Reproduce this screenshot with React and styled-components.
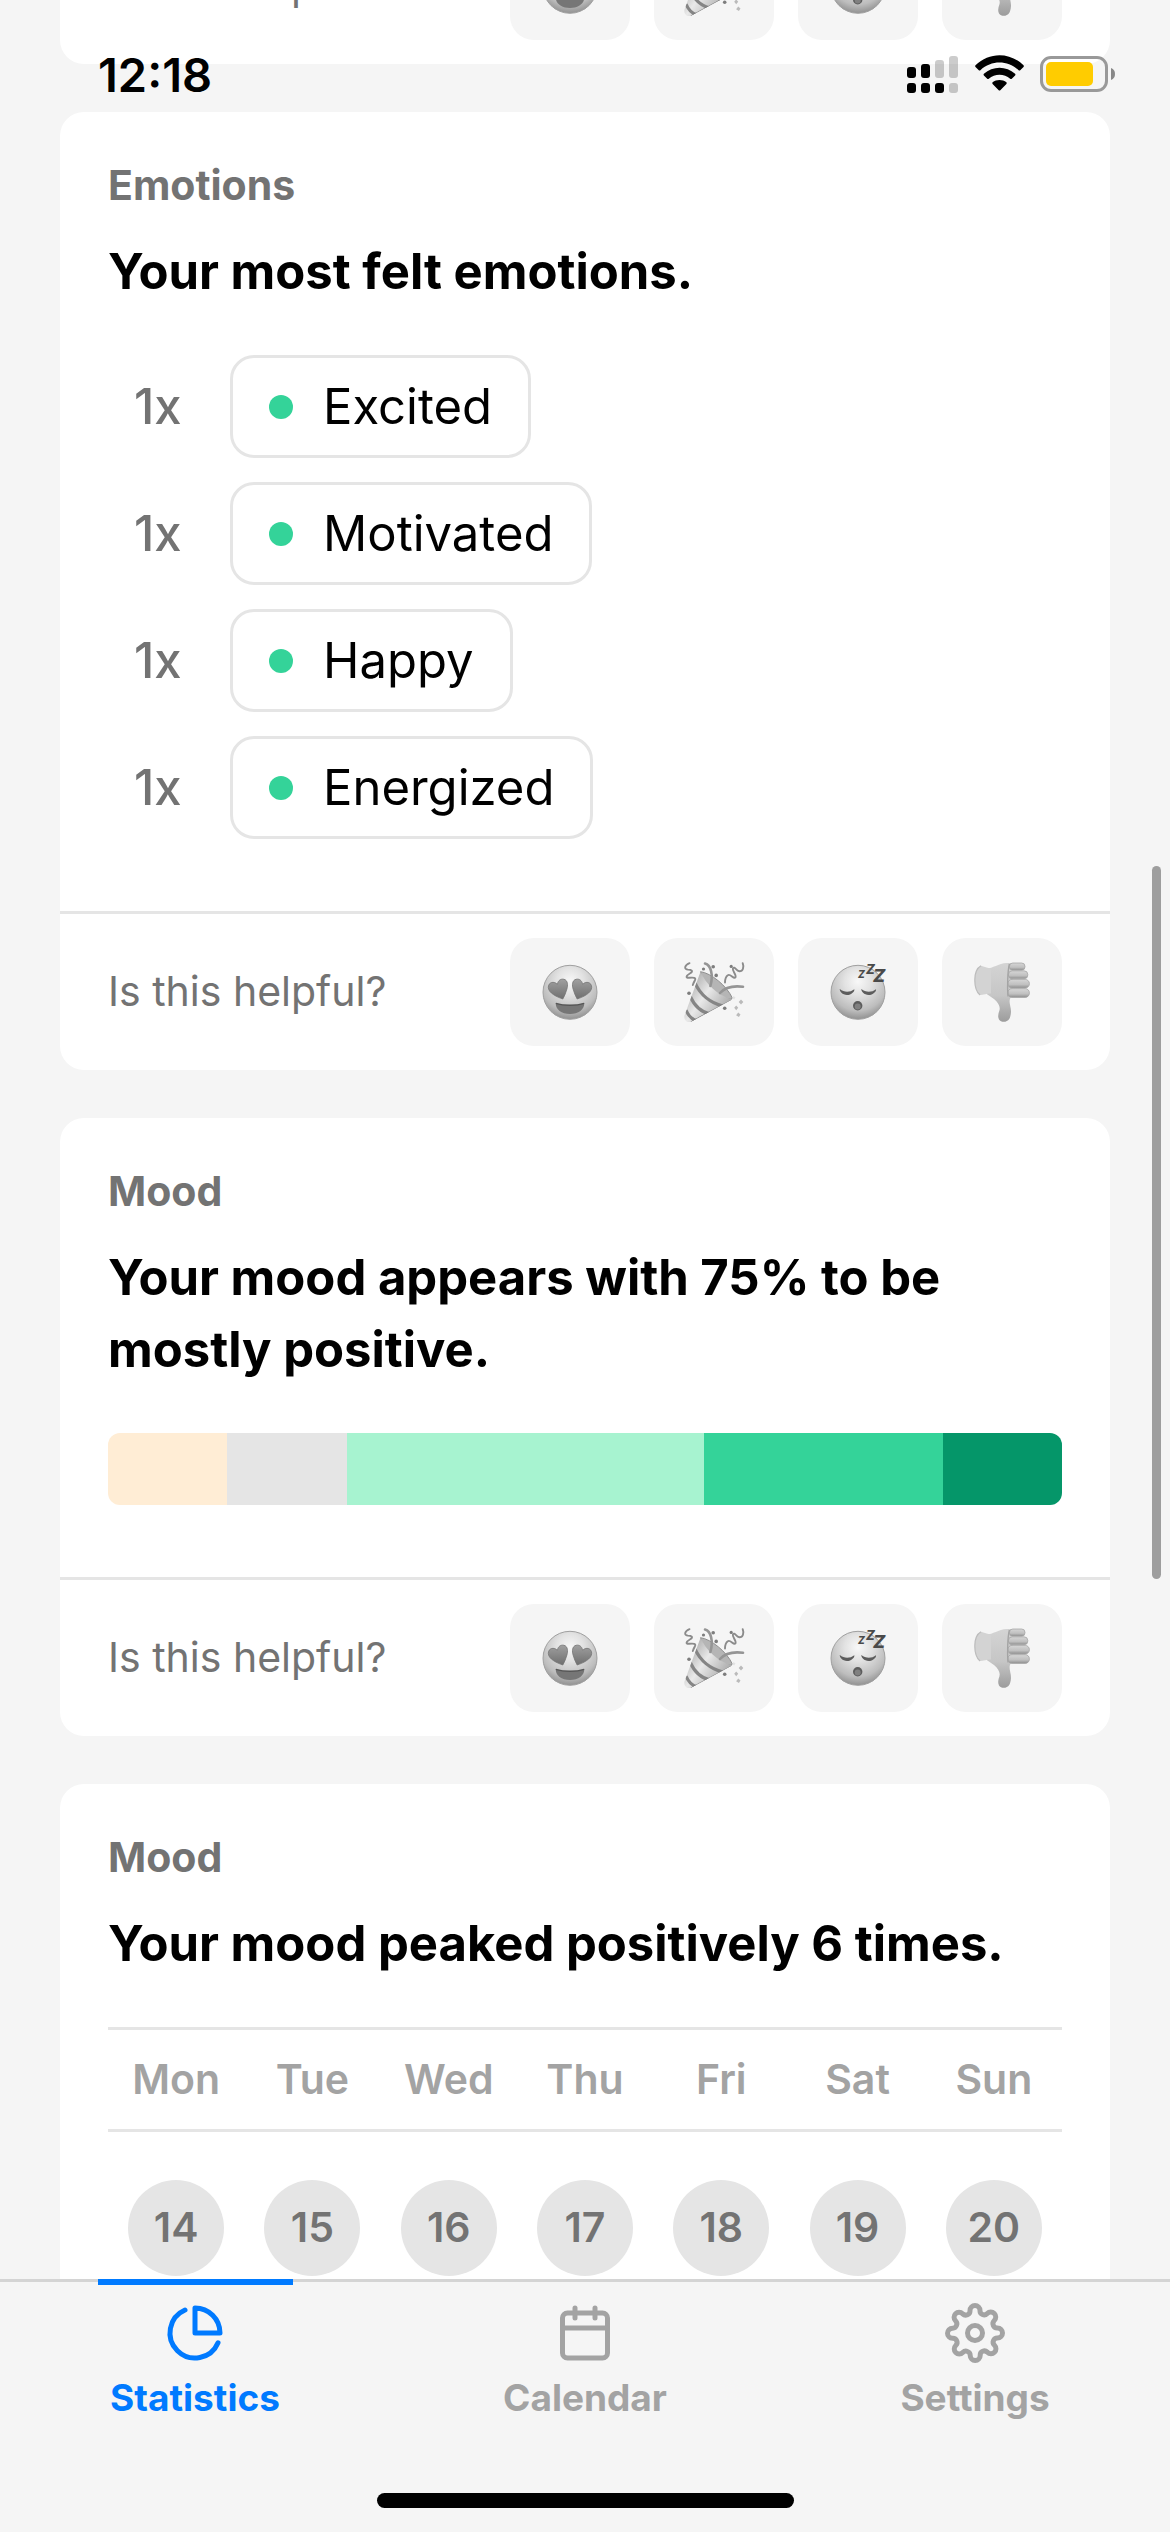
import React, { useId } from 'react';
import styled, { createGlobalStyle } from 'styled-components';
import { FiPieChart, FiCalendar, FiSettings } from 'react-icons/fi';

const emotions = [
  { count: 1, name: 'Excited' },
  { count: 1, name: 'Motivated' },
  { count: 1, name: 'Happy' },
  { count: 1, name: 'Energized' },
];

const moodScale = [
  { label: 'bad', share: 1, color: '#ffedd5' },
  { label: 'neutral', share: 1, color: '#e5e5e5' },
  { label: 'good', share: 3, color: '#a7f3d0' },
  { label: 'very good', share: 2, color: '#34d399' },
  { label: 'extremely good', share: 1, color: '#059669' },
];

const weekdays = ['Mon', 'Tue', 'Wed', 'Thu', 'Fri', 'Sat', 'Sun'];
const days = [14, 15, 16, 17, 18, 19, 20];

const tabs = [
  { name: 'Statistics', Icon: FiPieChart, active: true },
  { name: 'Calendar', Icon: FiCalendar },
  { name: 'Settings', Icon: FiSettings },
];

/* ---------- reaction drawings ---------- */

const FaceGradient = ({ id }) => (
  <radialGradient id={id} cx='0.5' cy='0.3' r='0.72'>
    <stop offset='0' stopColor='#f8f8f8' />
    <stop offset='0.35' stopColor='#e2e2e2' />
    <stop offset='0.75' stopColor='#bdbdbd' />
    <stop offset='1' stopColor='#8c8c8c' />
  </radialGradient>
);

const HEART =
  'M22.8 37C17 35 8.3 31 8.3 25.3C8.3 20.3 14 18.6 17.4 22.4C18 18 21.2 16.6 24 17.3C28 18.3 28 23.5 26.9 27C25.9 30.5 24.6 34 22.8 37Z';

const HeartEyes = () => {
  const id = useId();
  return (
    <Drawing viewBox='0 0 60 60' aria-hidden='true'>
      <defs>
        <FaceGradient id={id} />
        <linearGradient id={`${id}h`} x1='0' y1='0' x2='0' y2='1'>
          <stop offset='0' stopColor='#a0a0a0' />
          <stop offset='1' stopColor='#6f6f6f' />
        </linearGradient>
      </defs>
      <circle cx='30' cy='30.3' r='27' fill={`url(#${id})`} stroke='#a0a0a0' />
      <g fill={`url(#${id}h)`} stroke='#757575' strokeWidth='0.8'>
        <path d={HEART} />
        <path d={HEART} transform='translate(60 0) scale(-1 1)' />
      </g>
      <path
        d='M15.8 41.3C24 43.8 36 43.8 44.2 41.3C44.6 47.4 38.4 52 30 52S15.4 47.4 15.8 41.3Z'
        fill='#767676'
      />
      <path
        d='M15.8 41.3C24 43.8 36 43.8 44.2 41.3'
        fill='none'
        stroke='#555'
        strokeWidth='1.4'
      />
    </Drawing>
  );
};

const PartyPopper = () => {
  const id = useId();
  return (
    <Drawing viewBox='0 0 60 60' aria-hidden='true'>
      <defs>
        <linearGradient id={id} x1='0' y1='0.3' x2='0.7' y2='0.8'>
          <stop offset='0' stopColor='#9c9c9c' />
          <stop offset='0.5' stopColor='#e9e9e9' />
          <stop offset='1' stopColor='#a8a8a8' />
        </linearGradient>
        <clipPath id={`${id}c`}>
          <path d='M16.5 9.7C22 22 33 33 48 37.5L7.5 59.5C3 61.5 -0.5 58 0.5 53.5Z' />
        </clipPath>
      </defs>
      <path
        d='M16.5 9.7C27 11 43 24 48.3 36C46 42 18 24 16.5 9.7Z'
        fill='#b5b5b5'
        stroke='#8f8f8f'
      />
      <g clipPath={`url(#${id}c)`}>
        <rect width='60' height='60' fill={`url(#${id})`} />
        <g fill='none' stroke='#858585' strokeWidth='3.2'>
          <path d='M11 21C16 32 26 41 39 44' />
          <path d='M6 34C10 43 17 50 26 52' />
          <path d='M2 48C4 53 7 57 13 59' />
        </g>
        <path d='M7 60L48 38' stroke='#6c6c6c' strokeWidth='1.4' />
      </g>
      <g fill='none' stroke='#959595' strokeWidth='2.6' strokeLinecap='round'>
        <path d='M21 1.5C27 3 29.5 13 26.4 24' />
        <path d='M36 31C41 25.5 49 23.5 59 24.8' />
      </g>
      <g fill='none' stroke='#8b8b8b' strokeWidth='1.9' strokeLinecap='round'>
        <path d='M5.5 1.2C0 3.5 0 7.5 4 7.6C7.5 7.6 9.8 9 6.2 11.2C1.6 14 1.6 16 5 15.8C9.5 15.4 12.5 15.4 10.8 18.6C9.6 20.4 9.3 21.3 8.8 23' />
        <path d='M58.7 1.2C60.2 5 59 9.4 55.4 9.3C52 9 50.6 3.6 48.9 6.4C48 9 53 13 51.4 15.4C49.6 17.6 46.4 11.2 43.8 13.2C41.2 15 41 18 41 20.5' />
      </g>
      <g fill='#7d7d7d'>
        <circle cx='19.5' cy='7' r='1.6' />
        <circle cx='29.2' cy='4.7' r='1.8' />
        <circle cx='32.2' cy='13.4' r='1.8' />
        <circle cx='47.2' cy='4.4' r='1.6' />
        <circle cx='5' cy='31.2' r='1.8' />
        <circle cx='40.7' cy='46.2' r='1.8' />
      </g>
      <g fill='#bababa'>
        <path d='M57 37.6l2.3 2.4-2.3 2.4-2.3-2.4zM52.2 43.4l2 2.4-2 2.4-2-2.4zM54.2 50.4l2.3 2-1.6 2.6-2.8-1.8z' />
        <path d='M49.5 34l2 1.6-1.4 1.8-1.8-1.4z' fill='#e2e2e2' />
      </g>
    </Drawing>
  );
};

const Sleeping = () => {
  const id = useId();
  return (
    <Drawing viewBox='0 0 60 60' aria-hidden='true'>
      <defs>
        <FaceGradient id={id} />
      </defs>
      <circle cx='30' cy='30.3' r='27' fill={`url(#${id})`} stroke='#a0a0a0' />
      <g fill='#5c5c5c'>
        <path d='M11.8 27C16 30.6 22 30.6 26.3 27.2C27 29 23.5 33 19 33S11.2 29 11.8 27Z' />
        <path d='M33.4 27C37.6 30.6 43.8 30.6 48 27.2C48.7 29 45 33 40.6 33S32.8 29 33.4 27Z' />
        <circle cx='29.7' cy='43.7' r='4.7' />
      </g>
      <circle cx='29.7' cy='44.6' r='3' fill='#808080' />
      <g
        fill='#4a4a4a'
        fontFamily='Inter, sans-serif'
        fontWeight='800'
        fontStyle='italic'
      >
        <text x='30' y='16' fontSize='10'>Z</text>
        <text x='38' y='12' fontSize='13'>Z</text>
        <text x='45' y='20' fontSize='18'>Z</text>
      </g>
    </Drawing>
  );
};

const ThumbDown = () => {
  const id = useId();
  return (
    <Drawing viewBox='0 0 60 60' aria-hidden='true'>
      <defs>
        <linearGradient id={id} x1='0' y1='0' x2='0' y2='1'>
          <stop offset='0' stopColor='#d4d4d4' />
          <stop offset='0.55' stopColor='#c6c6c6' />
          <stop offset='1' stopColor='#9c9c9c' />
        </linearGradient>
        <linearGradient id={`${id}f`} x1='0' y1='0' x2='0' y2='1'>
          <stop offset='0' stopColor='#d6d6d6' />
          <stop offset='0.6' stopColor='#c0c0c0' />
          <stop offset='1' stopColor='#8e8e8e' />
        </linearGradient>
      </defs>
      <path
        d='M14.5 6.5C21 6.5 26 1.4 35 1H41L40 34.6C38.4 35.4 37.8 37 37.6 39C37.4 42 39.2 46 39 50C38.8 53 38.2 55.4 37.2 57C35 60.6 29 60.8 27 57.4C25.6 55 26.2 51.6 27.4 48.6C28.4 45.6 27 42.6 24.6 39.6C21.8 36.2 17.8 34.4 15 32.2Z'
        fill={`url(#${id})`}
      />
      <path
        d='M9 3.8C12 4.6 15.6 6 19 6.6V31.6C15.4 31.4 11.4 33 8 33C4.4 30 2.8 24 2.8 18S5 6 9 3.8Z'
        fill='#d3d3d3'
      />
      <path
        d='M9 3.8C5 6 2.8 12 2.8 18S4.4 30 8 33'
        fill='none'
        stroke='#bcbcbc'
        strokeWidth='1.2'
      />
      <g fill={`url(#${id}f)`} stroke='#a6a6a6' strokeWidth='0.8'>
        <rect x='37.4' y='1' width='15.6' height='7.2' rx='3.4' />
        <rect x='36.4' y='8.8' width='19.4' height='8' rx='3.8' />
        <rect x='35.8' y='17.4' width='21.6' height='8.6' rx='4.2' />
        <rect x='35.8' y='26.6' width='21.6' height='8.8' rx='4.2' />
      </g>
      <path
        d='M37.4 2C35.6 9 35.2 26 36 34.5'
        fill='none'
        stroke='#a4a4a4'
        strokeWidth='1.4'
      />
    </Drawing>
  );
};

const reactions = [
  { name: 'Love it', Picture: HeartEyes },
  { name: 'Celebrate', Picture: PartyPopper },
  { name: 'Boring', Picture: Sleeping },
  { name: 'Not helpful', Picture: ThumbDown },
];

/* ---------- components ---------- */

const Feedback = () => (
  <FeedbackRow>
    <Question>Is this helpful?</Question>
    <Reactions>
      {reactions.map(({ name, Picture }) => (
        <ReactionButton key={name} type='button' aria-label={name}>
          <Picture />
        </ReactionButton>
      ))}
    </Reactions>
  </FeedbackRow>
);

const StatCard = ({ category, title, children, feedback }) => (
  <Card>
    <CardBody>
      <Category>{category}</Category>
      <Title>{title}</Title>
      {children}
    </CardBody>
    {feedback && <Feedback />}
  </Card>
);

const StatusBar = () => (
  <StatusRow>
    <Clock>12:18</Clock>
    <StatusIcons viewBox='0 0 210 40' aria-hidden='true'>
      <g>
        <rect x='0' y='12' width='9' height='11' rx='3' />
        <rect x='14' y='9' width='9' height='14' rx='3' />
        <rect x='28' y='5' width='9' height='18' rx='3' opacity='0.2' />
        <rect x='42' y='1' width='9' height='22' rx='3' opacity='0.2' />
        <rect x='0' y='28' width='9' height='10' rx='3' />
        <rect x='14' y='28' width='9' height='10' rx='3' />
        <rect x='28' y='28' width='9' height='10' rx='3' />
        <rect x='42' y='28' width='9' height='10' rx='3' opacity='0.2' />
      </g>
      <g transform='translate(68 0)'>
        <path d='M0.5 10.2C14 -3.2 35 -3.2 48.5 10.2C49 10.8 49 11.4 48.5 12L45.2 15.2C44.8 15.6 44.2 15.6 43.6 15.2C32.6 5 16.4 5 5.4 15.2C4.8 15.6 4.2 15.6 3.8 15.2L0.5 12C0 11.4 0 10.8 0.5 10.2Z' />
        <path d='M8.9 18.7C17.6 10.6 31.4 10.6 40.1 18.7C40.6 19.2 40.6 19.9 40.1 20.4L36.8 23.7C36.3 24.1 35.7 24.1 35.2 23.7C29.2 18.5 19.8 18.5 13.8 23.7C13.3 24.1 12.7 24.1 12.2 23.7L8.9 20.4C8.4 19.9 8.4 19.2 8.9 18.7Z' />
        <path d='M17.6 27.3C21.4 24.2 27.6 24.2 31.4 27.3C31.9 27.8 31.9 28.4 31.4 28.9L25.3 35.2C24.8 35.7 24.2 35.7 23.7 35.2L17.6 28.9C17.1 28.4 17.1 27.8 17.6 27.3Z' />
      </g>
      <g transform='translate(133 1)'>
        <rect x='1.5' y='1.5' width='65' height='33' rx='9.5' fill='none' stroke='#999' strokeWidth='3' />
        <rect x='6' y='6' width='47' height='24' rx='5' fill='#fc0' />
        <path d='M71 12C74 13 75 15.4 75 18S74 23 71 24Z' fill='#888' />
      </g>
    </StatusIcons>
  </StatusRow>
);

const App = () => {
  return (
    <Screen>
      <GlobalStyle />
      <StatusBar />
      <Feed>
        <Card>
          <Feedback />
        </Card>

        <StatCard category='Emotions' title='Your most felt emotions.' feedback>
          <EmotionList>
            {emotions.map(({ count, name }) => (
              <li key={name}>
                <Count>{count}x</Count>
                <Pill>
                  <Dot />
                  {name}
                </Pill>
              </li>
            ))}
          </EmotionList>
        </StatCard>

        <StatCard
          category='Mood'
          title='Your mood appears with 75% to be mostly positive.'
          feedback
        >
          <MoodBar>
            {moodScale.map(({ label, share, color }) => (
              <Segment key={label} $share={share} $color={color} />
            ))}
          </MoodBar>
        </StatCard>

        <StatCard category='Mood' title='Your mood peaked positively 6 times.'>
          <Week>
            <thead>
              <tr>
                {weekdays.map((day) => (
                  <th key={day} scope='col'>
                    {day}
                  </th>
                ))}
              </tr>
            </thead>
            <tbody>
              <tr>
                {days.map((day) => (
                  <td key={day}>
                    <Day>{day}</Day>
                  </td>
                ))}
              </tr>
            </tbody>
          </Week>
        </StatCard>
      </Feed>
      <ScrollThumb />
      <BottomArea>
        <TabBar>
          {tabs.map(({ name, Icon, active }) => (
            <Tab key={name} href={`#${name.toLowerCase()}`} $active={active}>
              <Icon size={60} />
              {name}
            </Tab>
          ))}
        </TabBar>
        <HomeIndicator />
      </BottomArea>
    </Screen>
  );
};

/* ---------- styles ---------- */

const GlobalStyle = createGlobalStyle`
  * {
    box-sizing: border-box;
  }
  body {
    margin: 0;
    background: #f5f5f5;
    color: #000;
    font-family: Inter, 'Liberation Sans', sans-serif;
  }
`;

const Screen = styled.div`
  position: relative;
  display: flex;
  flex-direction: column;
  height: 100vh;
  overflow: hidden;
`;

const StatusRow = styled.header`
  position: absolute;
  top: 0;
  left: 0;
  right: 0;
  z-index: 1;
  display: flex;
  justify-content: space-between;
  align-items: center;
  padding: 47px 53px 0 98px;
`;

const Clock = styled.time`
  font-size: 47px;
  line-height: 56px;
  font-weight: 600;
`;

const StatusIcons = styled.svg`
  width: 210px;
  height: 40px;
`;

const Feed = styled.main`
  flex: 1;
  min-height: 0;
  display: flex;
  flex-direction: column;
  gap: 48px;
  padding: 0 60px;
  overflow-y: auto;
  scrollbar-width: none;

  /* the list is scrolled part of the way down */
  > :first-child {
    margin-top: -95px;
  }
`;

const Card = styled.section`
  flex-shrink: 0;
  background: #fff;
  border-radius: 24px;
`;

const CardBody = styled.div`
  padding: 48px 48px 72px;
`;

const Category = styled.h2`
  margin: 0 0 25px;
  font-size: 41px;
  line-height: 51px;
  font-weight: 700;
  color: #737373;
`;

const Title = styled.h3`
  margin: 0 0 47px;
  font-size: 49px;
  line-height: 72px;
  font-weight: 700;
`;

const EmotionList = styled.ul`
  display: flex;
  flex-direction: column;
  gap: 24px;
  margin: 0;
  padding: 0 0 0 26px;
  list-style: none;

  li {
    display: flex;
    align-items: center;
  }
`;

const Count = styled.span`
  width: 96px;
  font-size: 49px;
  line-height: 61px;
  font-weight: 500;
  color: #737373;
`;

const Pill = styled.span`
  display: flex;
  align-items: center;
  gap: 30px;
  padding: 18px 36px;
  border: 3px solid #e5e5e5;
  border-radius: 24px;
  font-size: 49px;
  line-height: 61px;
`;

const Dot = styled.span`
  width: 24px;
  height: 24px;
  border-radius: 50%;
  background: #34d399;
`;

const MoodBar = styled.div`
  display: flex;
  height: 72px;
  border-radius: 12px;
  overflow: hidden;
`;

const Segment = styled.div`
  flex: ${({ $share }) => $share};
  background: ${({ $color }) => $color};
`;

const Week = styled.table`
  width: 100%;
  table-layout: fixed;
  border-collapse: separate;
  border-spacing: 0;

  th {
    padding: 24px 0;
    border-top: 3px solid #e5e5e5;
    border-bottom: 3px solid #e5e5e5;
    font-size: 41px;
    line-height: 51px;
    font-weight: 600;
    color: #a3a3a3;
  }
  td {
    padding: 48px 0 0;
  }
`;

const Day = styled.span`
  display: block;
  width: 96px;
  height: 96px;
  margin: 0 auto;
  border-radius: 50%;
  background: #e5e5e5;
  font-size: 41px;
  line-height: 94px;
  font-weight: 600;
  text-align: center;
  color: #737373;
`;

const FeedbackRow = styled.footer`
  display: flex;
  align-items: center;
  justify-content: space-between;
  padding: 24px 48px;
  border-top: 3px solid #e5e5e5;
`;

const Question = styled.span`
  padding-bottom: 1px;
  font-size: 41px;
  line-height: 51px;
  color: #737373;
`;

const Reactions = styled.div`
  display: flex;
  gap: 24px;
`;

const ReactionButton = styled.button`
  display: flex;
  align-items: center;
  justify-content: center;
  width: 120px;
  height: 108px;
  padding: 0;
  border: 0;
  border-radius: 24px;
  background: #f5f5f5;
`;

const Drawing = styled.svg`
  width: 60px;
  height: 60px;
  overflow: visible;
`;

const ScrollThumb = styled.div`
  position: absolute;
  top: 866px;
  right: 9px;
  width: 9px;
  height: 713px;
  border-radius: 5px;
  background: #9e9e9e;
`;

const BottomArea = styled.div`
  padding-bottom: 24px;
  border-top: 3px solid #d4d4d4;
  background: #f5f5f5;
`;

const TabBar = styled.nav`
  display: flex;
`;

const Tab = styled.a`
  position: relative;
  flex: 1;
  display: flex;
  flex-direction: column;
  align-items: center;
  gap: 12px;
  padding: 21px 0 72px;
  font-size: 37px;
  line-height: 46px;
  font-weight: 700;
  text-decoration: none;
  color: ${({ $active }) => ($active ? '#007aff' : '#a3a3a3')};

  &::before {
    content: '';
    display: ${({ $active }) => ($active ? 'block' : 'none')};
    position: absolute;
    top: -3px;
    left: 25%;
    width: 50%;
    height: 6px;
    background: #007aff;
  }
`;

const HomeIndicator = styled.div`
  width: 417px;
  height: 15px;
  margin: 0 auto;
  border-radius: 8px;
  background: #000;
`;

export default App;
